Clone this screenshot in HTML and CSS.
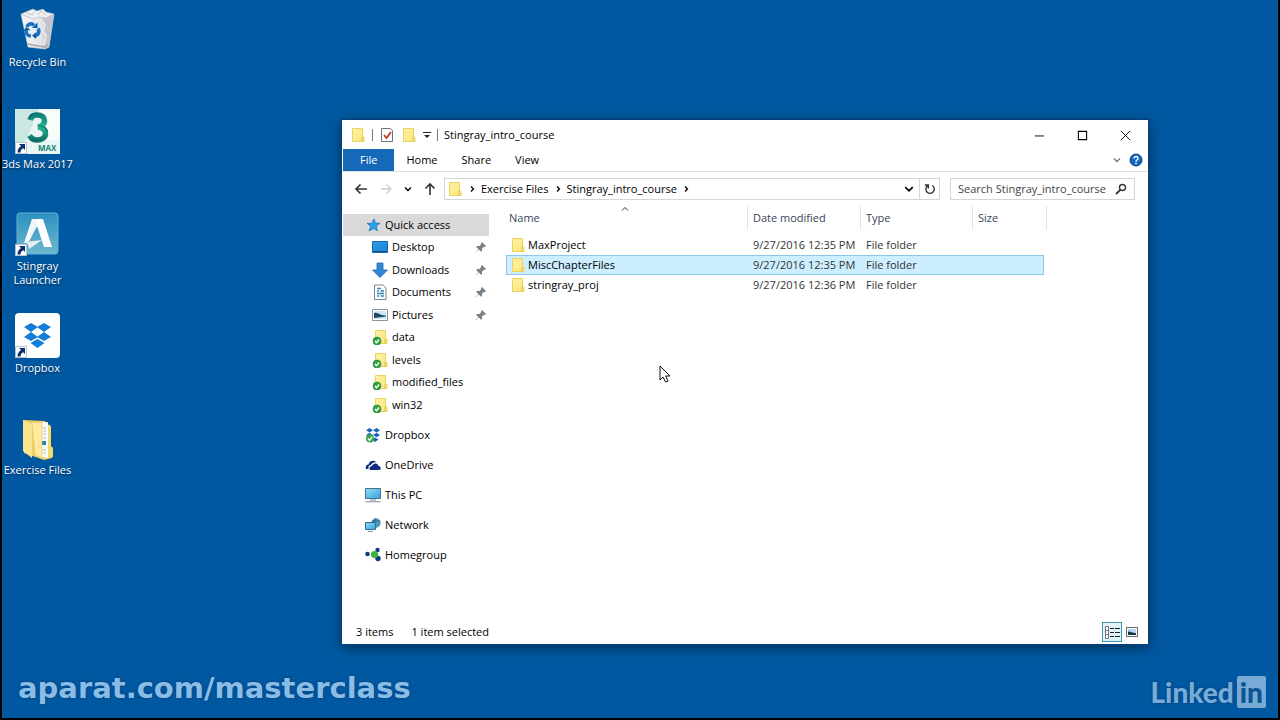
FILE: index.html
```
<!DOCTYPE html>
<html lang="en">
<head>
    <meta charset="UTF-8">
    <title>Stingray_intro_course</title>
    <link rel="stylesheet" href="styles.css">
</head>
<body>
<!-- shared icons -->
<svg class="defs">
    <defs>
        <linearGradient id="fold" x1="0" y1="0" x2="1" y2="1">
            <stop offset="0" stop-color="#fdf2a4"/><stop offset="1" stop-color="#fbe57c"/>
        </linearGradient>
        <linearGradient id="screen" x1="0" y1="0" x2="1" y2="1">
            <stop offset="0" stop-color="#2f97e6"/><stop offset="1" stop-color="#1c86d8"/>
        </linearGradient>
        <linearGradient id="monitor" x1="0" y1="0" x2="1" y2="1">
            <stop offset="0" stop-color="#8fdcf8"/><stop offset="1" stop-color="#35a3de"/>
        </linearGradient>
        <linearGradient id="teal" x1="0" y1="0" x2="0" y2="1">
            <stop offset="0" stop-color="#157f7a"/><stop offset=".5" stop-color="#2ab99a"/><stop offset="1" stop-color="#0f7168"/>
        </linearGradient>
        <linearGradient id="stingray" x1="0" y1="0" x2="0" y2="1">
            <stop offset="0" stop-color="#2b91c0"/><stop offset="1" stop-color="#6fb8cf"/>
        </linearGradient>
        <linearGradient id="bin" x1="0" y1="0" x2="1" y2="0">
            <stop offset="0" stop-color="#f6f8fa"/><stop offset=".6" stop-color="#e3e5ea"/><stop offset="1" stop-color="#b9bcc6"/>
        </linearGradient>
    </defs>
    <symbol id="folder" viewBox="0 0 16 16">
        <path d="M2.500 1.500h10v8.500h1.500v4.500H2.500z" fill="url(#fold)" stroke="#ead45c"/>
        <path d="M12 10v5" stroke="#dcc04a"/>
    </symbol>
    <symbol id="synced" viewBox="0 0 16 16">
        <path d="M3.500 1.500h10v8.500h1.500v4.500H3.500z" fill="url(#fold)" stroke="#ead45c"/>
        <path d="M13 10v5" stroke="#dcc04a"/>
        <circle cx="5" cy="12" r="4" fill="#35a343" stroke="#1f7d33" stroke-width=".6"/>
        <path d="M3 12l1.500 1.700L7.200 10.500" fill="none" stroke="#fff" stroke-width="1.300"/>
    </symbol>
    <symbol id="pin" viewBox="0 0 12 12">
        <path d="M7 1l4 4-1 1-1-.3-2 2 .1 2.300-1 .8-2.300-2.300L1 11.300.7 11 3.500 8.200 1.200 6l.8-1 2.300.1 2-2L6 2z" fill="#7b838a"/>
    </symbol>
    <symbol id="shortcut" viewBox="0 0 12 12">
        <path d="M.5.5h11v11H.5z" fill="#fff" stroke="#b9c3d0"/>
        <path d="M4 2h6v6L8.200 6.200C6.500 7.200 5.500 8.500 5.500 10.500H2.500C2.500 7.500 3.800 5.500 6 4z" fill="#0f2f74"/>
    </symbol>
    <symbol id="chev" viewBox="0 0 8 8">
        <path d="M1 2.500l3 3 3-3" fill="none" stroke="currentColor" stroke-width="1.400"/>
    </symbol>
    <symbol id="chevright" viewBox="0 0 8 8">
        <path d="M3 1.500L5.500 4 3 6.500" fill="none" stroke="currentColor" stroke-width="1.300"/>
    </symbol>
</svg>

<div class="desktop">
    <nav class="shortcuts">
        <a href="#">
            <svg viewBox="0 0 48 48">
                <path d="M8 9l33 0-5 33-4 2-17-2z" fill="url(#bin)" stroke="#cfd5dd" stroke-width=".6"/>
                <path d="M30 12l11-3-5 33-5 2z" fill="#c3c5ce"/>
                <path d="M8 9l7-3 5-2 4 2 6-2 3 3 8 2-8 4-8-1-5 2z" fill="#eef1f4" stroke="#aab2bc" stroke-width=".6"/>
                <path d="M14 8l5 2 3-4M25 10l3-4 5 4" fill="none" stroke="#bcc3cb"/>
                <path d="M30 16l2 4-2 6 3 5-2 9" fill="none" stroke="#eceef2" stroke-width="1.500"/>
                <path d="M15 39l16 3 4-2" fill="none" stroke="#b3a69e" stroke-width="1.500"/>
                <g fill="none" stroke="#1b73c4" stroke-width="3.600">
                    <path d="M14 22c1-3.500 5-4 7-1.500"/><path d="M25 23.500c2 3.500 0 7-3.500 7"/><path d="M18 31c-4 0-5.500-3-4.500-6"/>
                </g>
                <path d="M19 23l5.500 0V17.500zM23.500 27l-4.500 3.500 4 3.500zM10 26l3.500-4 4 3z" fill="#0f5cab"/>
            </svg>
            <span>Recycle Bin</span>
        </a>
        <a href="#">
            <svg viewBox="0 0 48 48">
                <path d="M2 2h45v45H2z" fill="#e9f6f3"/>
                <path d="M2 2h24L12 36H2z" fill="#cbe7e2"/>
                <path d="M26 2h21v31H36z" fill="#f8fdfb"/>
                <path d="M17 13c1-4 4-5 7-5 5 0 7.500 2.500 7.500 6 0 3-2 5-6.500 6 5 .5 7.500 3 7.500 6.500 0 4-4 6.500-8.500 6.500-4 0-6-2-7.500-4.500" fill="none" stroke="url(#teal)" stroke-width="5.500"/>
                <path d="M16 12c2-5 5-6 8-6M26 19c6 .5 8 3 8 6" fill="none" stroke="#0b655f" stroke-width="1.200"/>
                <text x="25" y="44" class="max">MAX</text>
                <use href="#shortcut" x="2" y="35" width="12" height="12"/>
            </svg>
            <span>3ds Max 2017</span>
        </a>
        <a href="#">
            <svg viewBox="0 0 48 48">
                <rect x="4" y="4" width="41" height="41" rx="3" fill="url(#stingray)" stroke="#69b4d6"/>
                <path d="M19 10h11l9 28h-8l-7-21-8 15-5 2z" fill="#fff"/>
                <path d="M11 33l18-2-13 9-1-5z" fill="#e5eef3"/>
                <path d="M19 10h5v7l-8 15z" fill="#edf5f8"/>
                <use href="#shortcut" x="2" y="35" width="12" height="12"/>
            </svg>
            <span>Stingray<br>Launcher</span>
        </a>
        <a href="#">
            <svg viewBox="0 0 48 48">
                <rect x="2" y="2" width="45" height="45" rx="4" fill="#fff"/>
                <path d="M18 12l7 4-7 5-7-5zM31 12l7 4-7 5-7-5zM18 21l7 5-7 4-7-4zM31 21l7 5-7 4-7-4zM24.500 28l7 4-7 5-7-5z" fill="#137ed8"/>
                <use href="#shortcut" x="2" y="35" width="12" height="12"/>
            </svg>
            <span>Dropbox</span>
        </a>
        <a href="#">
            <svg viewBox="0 0 48 48">
                <path d="M10 7l22 1 1 3 4 1v21l2 2v10l-8 2-20-7z" fill="#efcf62"/>
                <path d="M21 10l14-1v36l-12-2z" fill="#fafafa"/>
                <path d="M30 15h3M30 18h3M30 21h3M30 25h3M30 37h3M30 40h3" stroke="#b8bec4"/>
                <path d="M29 28h4v4h-4z" fill="#2389a9"/>
                <path d="M19 9l10 1v35l-7-3z" fill="#ffeaa0" stroke="#e2c564" stroke-width=".6"/>
                <path d="M10 7l9 4v34L10 38z" fill="#fbe58c"/>
                <path d="M35 12l3 1v20l2 2v9l-5 0z" fill="#f2da6c"/>
            </svg>
            <span>Exercise Files</span>
        </a>
    </nav>

    <main class="window">
        <header class="titlebar">
            <svg class="ico"><use href="#folder"/></svg>
            <i class="bar"></i>
            <button aria-label="Properties">
                <svg class="ico" viewBox="0 0 16 16">
                    <path d="M2.500 1.500h9l2 2v11h-11z" fill="#fff" stroke="#6d747b"/>
                    <path d="M5 8l2.500 3L12 5" fill="none" stroke="#c0391f" stroke-width="1.800"/>
                </svg>
            </button>
            <button aria-label="New folder"><svg class="ico"><use href="#folder"/></svg></button>
            <button aria-label="Customize toolbar">
                <svg class="mini" viewBox="0 0 8 8"><path d="M0 1.500h8" stroke="#222"/><path d="M1 4h6L4 7z" fill="#222"/></svg>
            </button>
            <i class="bar"></i>
            <h1>Stingray_intro_course</h1>
            <div class="controls">
                <button aria-label="Minimize"><svg viewBox="0 0 12 12"><path d="M1 6.500h10" stroke="#000"/></svg></button>
                <button aria-label="Maximize"><svg viewBox="0 0 12 12"><path d="M1.500 1.500h9v9h-9z" fill="none" stroke="#000" stroke-width="1.200"/></svg></button>
                <button aria-label="Close"><svg viewBox="0 0 12 12"><path d="M1 1l10 10M11 1L1 11" stroke="#000"/></svg></button>
            </div>
        </header>

        <div class="ribbon">
            <button class="file">File</button>
            <button>Home</button>
            <button>Share</button>
            <button>View</button>
            <div class="help">
                <button aria-label="Expand ribbon"><svg class="mini"><use href="#chev"/></svg></button>
                <button aria-label="Help">
                    <svg class="helpico" viewBox="0 0 14 14">
                        <circle cx="7" cy="7" r="6" fill="#1268bd" stroke="#0b3f86"/>
                        <path d="M5 5.500C5 2.800 9.200 3 9 5.500 8.900 7 7 7 7 8.700M7 9.700v1.500" fill="none" stroke="#fff" stroke-width="1.500"/>
                    </svg>
                </button>
            </div>
        </div>

        <div class="navbar">
            <div class="history">
                <button aria-label="Back"><svg class="arrow" viewBox="0 0 14 14"><path d="M13 7H2M6.500 2.500L2 7l4.500 4.500" fill="none" stroke="#333" stroke-width="1.600"/></svg></button>
                <button aria-label="Forward"><svg class="arrow" viewBox="0 0 14 14"><path d="M2 7h10M7.500 2.500L12 7l-4.500 4.500" fill="none" stroke="#ccc" stroke-width="1.300"/></svg></button>
                <button aria-label="Recent locations"><svg class="mini"><use href="#chev"/></svg></button>
                <button aria-label="Up"><svg class="arrow" viewBox="0 0 14 14"><path d="M7 13V2M2.500 6.500L7 2l4.500 4.500" fill="none" stroke="#333" stroke-width="1.600"/></svg></button>
            </div>
            <div class="address">
                <svg class="ico"><use href="#folder"/></svg>
                <svg class="mini"><use href="#chevright"/></svg>
                <a href="#">Exercise Files</a>
                <svg class="mini"><use href="#chevright"/></svg>
                <a href="#">Stingray_intro_course</a>
                <svg class="mini"><use href="#chevright"/></svg>
                <button class="drop" aria-label="Previous locations"><svg viewBox="0 0 8 8"><use href="#chev"/></svg></button>
                <button class="refresh" aria-label="Refresh">
                    <svg viewBox="0 0 12 12"><path d="M8.200 2.500A4.200 4.200 0 1 1 3.800 2.600M4.300 5.500V2H.8" fill="none" stroke="#333" stroke-width="1.400"/></svg>
                </button>
            </div>
            <label class="search">
                <input type="text" aria-label="Search" placeholder="Search Stingray_intro_course">
                <svg viewBox="0 0 12 12"><circle cx="7.500" cy="4.500" r="3" fill="none" stroke="#333" stroke-width="1.400"/><path d="M5.300 6.800L1 11" stroke="#333" stroke-width="1.800"/></svg>
            </label>
        </div>

        <div class="content">
            <nav class="tree">
                <a class="top current" href="#">
                    <svg class="ico" viewBox="0 0 16 16"><path d="M9 2l1.300 4 4.700.3-3.700 2.700 1 4.700L8.500 11.500 4 14l1.700-4.500L2 6.300l4.700.2z" fill="#2aa0e6" stroke="#1a76bd" stroke-width=".8"/></svg>Quick access</a>
                <div class="sub">
                    <a href="#"><svg class="ico" viewBox="0 0 16 16"><path d="M.5 2.500h15v11H.5z" fill="url(#screen)" stroke="#1569ad"/><path d="M1 12.500h14" stroke="#0d5394"/></svg>Desktop<svg class="pin"><use href="#pin"/></svg></a>
                    <a href="#"><svg class="ico" viewBox="0 0 16 16"><path d="M5 1h6v7h4.500L8 15.500.5 8H5z" fill="#2f87d8" stroke="#1c65b0" stroke-width=".8"/></svg>Downloads<svg class="pin"><use href="#pin"/></svg></a>
                    <a href="#"><svg class="ico" viewBox="0 0 16 16"><path d="M2.500 1h8.500l3 3v11.500H2.500z" fill="#fff" stroke="#7d868e"/><path d="M5 4.500h4M5 7h2M8.500 7H12M5 9.500h7M5 12h2M8.500 12H12" stroke="#3685b8" stroke-width="1.300"/></svg>Documents<svg class="pin"><use href="#pin"/></svg></a>
                    <a href="#"><svg class="ico" viewBox="0 0 16 16"><path d="M.5 2.500h15v11H.5z" fill="#fff" stroke="#8d9499"/><path d="M2 4h12v8H2z" fill="#cde8f6"/><path d="M2 6c4-1 6 3 12 2.500v1L2 11z" fill="#1f4a5f"/></svg>Pictures<svg class="pin"><use href="#pin"/></svg></a>
                    <a href="#"><svg class="ico"><use href="#synced"/></svg>data</a>
                    <a href="#"><svg class="ico"><use href="#synced"/></svg>levels</a>
                    <a href="#"><svg class="ico"><use href="#synced"/></svg>modified_files</a>
                    <a href="#"><svg class="ico"><use href="#synced"/></svg>win32</a>
                </div>
                <a class="top" href="#"><svg class="ico" viewBox="0 0 16 16"><path d="M4.500 1L8 3.200 4.500 5.500 1 3.200zM11.500 1L15 3.200l-3.500 2.300L8 3.200zM4.500 5.800L8 8l-3.500 2.300L1 8zM11.500 5.800L15 8l-3.500 2.300L8 8zM10 10.500l3.500 2L10 15l-3-2.500z" fill="#1767c0"/><circle cx="5" cy="11.500" r="4" fill="#3fa648"/><path d="M3 11.500l1.500 1.700 2.700-3.200" fill="none" stroke="#fff" stroke-width="1.300"/></svg>Dropbox</a>
                <a class="top" href="#"><svg class="ico" viewBox="0 0 16 16"><path d="M1 12c-1-3 1-4.500 2.500-4.500C4 4 9 2 11.500 5.500 9 5 7 6 6 8c-2 0-3 2-2.500 4z" fill="#0b2d7c"/><path d="M5 13c-1.200-2 0-4 2-4 1-3.500 6-3.500 6.500 0 2.500 0 3 3.500.8 4z" fill="#0b2d7c"/></svg>OneDrive</a>
                <a class="top" href="#"><svg class="ico" viewBox="0 0 16 16"><path d="M.5 1.500h15v10H.5z" fill="url(#monitor)" stroke="#4b7186"/><path d="M5 13h6M.5 14.800h15" stroke="#7c8d96"/></svg>This PC</a>
                <a class="top" href="#"><svg class="ico" viewBox="0 0 16 16"><circle cx="11" cy="6" r="4.700" fill="#5199bd"/><path d="M11 1.300c-3 3-2 7 0 9.400M7 4h8" fill="none" stroke="#2a678d"/><path d="M.5 5.500h10v7H.5z" fill="url(#monitor)" stroke="#316b91"/><path d="M3 14.500h5" stroke="#8a979e"/></svg>Network</a>
                <a class="top" href="#"><svg class="ico" viewBox="0 0 16 16"><circle cx="2.500" cy="7" r="2.300" fill="#153a84"/><circle cx="12.500" cy="3" r="2.200" fill="#153a84"/><circle cx="13" cy="11.500" r="2.700" fill="#153a84"/><circle cx="9.500" cy="7.500" r="3.600" fill="#3cb63f"/></svg>Homegroup</a>
            </nav>

            <div class="list">
                <svg class="sort" viewBox="0 0 8 8"><path d="M1 5.500l3-3 3 3" fill="none" stroke="#333"/></svg>
                <table>
                    <colgroup>
                        <col class="c-name"><col class="c-date"><col class="c-type"><col class="c-size"><col class="c-edge">
                    </colgroup>
                    <thead>
                    <tr><th>Name</th><th>Date modified</th><th>Type</th><th colspan="2">Size</th></tr>
                    </thead>
                    <tbody>
                    <tr><td><svg class="ico"><use href="#folder"/></svg>MaxProject</td><td>9/27/2016 12:35 PM</td><td>File folder</td><td></td></tr>
                    <tr class="selected"><td><svg class="ico"><use href="#folder"/></svg>MiscChapterFiles</td><td>9/27/2016 12:35 PM</td><td>File folder</td><td></td></tr>
                    <tr><td><svg class="ico"><use href="#folder"/></svg>stringray_proj</td><td>9/27/2016 12:36 PM</td><td>File folder</td><td></td></tr>
                    </tbody>
                </table>
            </div>
        </div>

        <footer class="status">
            <span>3 items</span>
            <span>1 item selected</span>
            <div class="views">
                <button class="on" aria-label="Details view">
                    <svg viewBox="0 0 18 18"><path d="M2.500 3.500h3v12h-3zM2.500 7.500h3M2.500 11.500h3" fill="#fff" stroke="#777"/><path d="M7 5.500h4M12 5.500h5M7 9.500h4M12 9.500h5M7 13.500h4M12 13.500h5" stroke="#222"/></svg>
                </button>
                <button aria-label="Thumbnail view">
                    <svg viewBox="0 0 18 18"><path d="M3.500 4.500h11v9h-11z" fill="#fff" stroke="#666"/><path d="M5 6h8v6H5z" fill="#b4d3f5"/><path d="M5 8.500c3 0 4 1.500 8 1.500v2H5z" fill="#143b43"/></svg>
                </button>
            </div>
        </footer>
    </main>

    <svg class="cursor" viewBox="0 0 12 18"><path d="M1 1v14l3-3 2.500 5 2.500-1-2.300-5H11z" fill="#fff" stroke="#111"/></svg>

    <p class="site">aparat.com/masterclass</p>
    <p class="brand">Linked<b>in</b></p>
</div>
</body>
</html>
```
FILE: styles.css
```
* {
    margin: 0;
    padding: 0;
    box-sizing: border-box;
}

body {
    background: #000;
    font: 11px/14px "Open Sans", "Noto Sans", sans-serif;
    color: #000;
}

a {
    color: inherit;
    text-decoration: none;
}

button {
    border: 0;
    background: none;
    font: inherit;
    color: inherit;
}

svg {
    display: block;
    flex: none;
}

.defs {
    position: absolute;
    width: 0;
    height: 0;
}

.ico {
    width: 16px;
    height: 16px;
}

.mini {
    width: 8px;
    height: 8px;
}

.desktop {
    position: relative;
    height: calc(100vh - 2px);
    margin: 0 2px 2px;
    background: #0058a0;
    overflow: hidden;
}

/* desktop icons */
.shortcuts {
    display: grid;
    grid-auto-rows: 102px;
    width: 68px;
}

.shortcuts a {
    display: flex;
    flex-direction: column;
    align-items: center;
    gap: 2px;
    padding-top: 5px;
    color: #fff;
    text-align: center;
    text-shadow: 0 1px 2px #002a55;
    white-space: nowrap;
}

.shortcuts svg {
    width: 48px;
    height: 48px;
}

.max {
    font: bold 8px "Open Sans", sans-serif;
    fill: #11857a;
    text-shadow: none;
}

/* explorer window */
.window {
    position: absolute;
    top: 120px;
    right: 130px;
    bottom: 74px;
    left: 340px;
    display: flex;
    flex-direction: column;
    background: #fff;
    border: 1px solid #fff;
    box-shadow: 0 0 0 1px #0a3f75, 0 3px 12px rgba(0, 0, 0, .5);
}

.titlebar {
    display: flex;
    align-items: center;
    gap: 6px;
    height: 28px;
    padding-left: 7px;
}

.titlebar h1 {
    font-size: 11px;
    font-weight: normal;
}

.bar {
    width: 1px;
    height: 12px;
    background: #777;
}

.controls {
    display: flex;
    margin-left: auto;
}

.controls button {
    width: 43px;
    height: 26px;
    padding: 0 16px;
}

.ribbon {
    display: flex;
    height: 23px;
    border-bottom: 1px solid #ddd;
}

.ribbon button {
    padding: 0 12px;
}

.ribbon .file {
    padding: 0 17px;
    background: #1668b8;
    color: #fff;
}

.help {
    display: flex;
    align-items: center;
    gap: 8px;
    margin-left: auto;
    padding-right: 4px;
    color: #777;
}

.ribbon .help button {
    padding: 0;
}

.helpico {
    width: 14px;
    height: 14px;
}

.navbar {
    display: flex;
    align-items: center;
    height: 34px;
    padding: 0 12px 0 11px;
}

.history {
    display: flex;
    align-items: center;
    gap: 11px;
    margin-right: 7px;
}

.arrow {
    width: 14px;
    height: 14px;
}

.address,
.search {
    display: flex;
    align-items: center;
    height: 22px;
    border: 1px solid #d5d5d5;
}

.address {
    flex: 1;
    gap: 5px;
    margin-right: 10px;
    padding-left: 2px;
}

.drop,
.refresh {
    display: flex;
    align-items: center;
    justify-content: center;
    height: 20px;
    width: 20px;
}

.drop {
    margin-left: auto;
}

.drop svg {
    width: 10px;
    height: 10px;
}

.refresh {
    margin-left: -5px;
    border-left: 1px solid #d5d5d5;
}

.refresh svg,
.search svg {
    width: 12px;
    height: 12px;
}

.search {
    width: 185px;
    padding: 0 7px;
}

.search input {
    flex: 1;
    min-width: 0;
    border: 0;
    outline: 0;
    font: inherit;
}

.search input::placeholder {
    color: #444;
}

.content {
    flex: 1;
    display: flex;
    min-height: 0;
}

/* left tree */
.tree {
    width: 146px;
    padding-top: 8px;
}

.tree a {
    display: flex;
    align-items: center;
    gap: 4px;
}

.tree .top {
    height: 30px;
    padding-left: 22px;
}

.tree .current {
    height: 22px;
    background: #d9d9d9;
}

.sub {
    display: grid;
    grid-auto-rows: 1fr;
    min-height: 180px;
    margin-bottom: 4px;
}

.sub a {
    padding: 0 2px 0 29px;
}

.pin {
    width: 12px;
    height: 12px;
    margin-left: auto;
}

/* file list */
.list {
    position: relative;
    padding-left: 17px;
}

.sort {
    position: absolute;
    top: -1px;
    left: 132px;
    width: 8px;
    height: 8px;
}

table {
    width: 541px;
    table-layout: fixed;
    border-spacing: 0;
}

.c-name {
    width: 242px;
}

.c-date {
    width: 113px;
}

.c-type {
    width: 112px;
}

.c-size {
    width: 71px;
}

.c-edge {
    width: 3px;
}

th {
    height: 24px;
    padding-left: 5px;
    border-right: 1px solid #e3e3e3;
    color: #39445c;
    font-weight: normal;
    text-align: left;
}

th:first-child {
    padding-left: 3px;
}

tbody::before {
    content: "";
    display: block;
    height: 5px;
}

td {
    height: 20px;
    padding-left: 5px;
    color: #333;
    white-space: nowrap;
}

td:first-child {
    display: flex;
    align-items: center;
    gap: 2px;
    padding-left: 4px;
    color: #000;
}

.selected td {
    background: #cceeff;
    border: 1px solid #8fc7e8;
    border-width: 1px 0;
}

.selected td:first-child {
    border-left-width: 1px;
    padding-left: 3px;
}

.selected td:last-child {
    border-right-width: 1px;
}

.status {
    display: flex;
    align-items: center;
    gap: 18px;
    height: 22px;
    padding: 0 5px 0 13px;
}

.views {
    display: flex;
    margin-left: auto;
}

.views button {
    width: 20px;
    height: 20px;
    border: 1px solid transparent;
}

.views .on {
    background: #dff3fb;
    border-color: #3f97b5;
}

.cursor {
    position: absolute;
    top: 365px;
    left: 657px;
    width: 12px;
    height: 18px;
}

/* watermarks */
.site,
.brand {
    position: absolute;
    color: #8abde6;
    font-weight: bold;
    text-shadow: 0 0 3px #003c78;
}

.site {
    left: 16px;
    bottom: 14px;
    font-family: "DejaVu Sans", sans-serif;
    font-size: 29px;
    line-height: 32px;
}

.brand {
    right: 12px;
    bottom: 10px;
    display: flex;
    align-items: center;
    gap: 3px;
    color: #78abd6;
    font-family: Lato, sans-serif;
    font-size: 28px;
    font-weight: 900;
    line-height: 32px;
}

.brand b {
    padding: 0 3px;
    border-radius: 2px;
    background: #78abd6;
    color: #0b5496;
    font-weight: 900;
    text-shadow: none;
}
```
